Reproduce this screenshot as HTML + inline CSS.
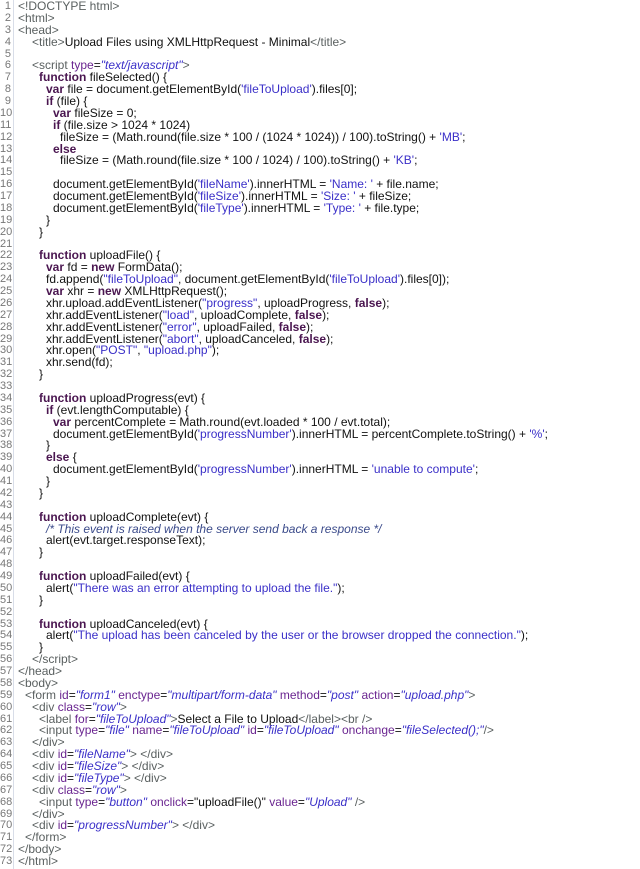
<!DOCTYPE html>
<html><head><style>
body{margin:0;background:#fff;width:640px;height:869px;overflow:hidden;font-family:"Liberation Sans",sans-serif;font-size:12px;color:#111}
#c{position:absolute;left:0;top:1px;width:640px}
.l{height:11.875px;line-height:11.875px;white-space:pre;position:relative}
.n{position:absolute;left:0;width:11px;text-align:right;color:#777;font-size:11px}
.t{position:absolute}
.g{color:#5a6060}.a{color:#6a2590}.v{color:#3a2fc8;font-style:italic}.k{color:#4a1650;font-weight:bold}.s{color:#3a2fc8}.cm{color:#3a4a8a;font-style:italic}
#bar{position:absolute;left:13px;top:0;width:1px;height:869px;background:#d8dde8}
</style></head><body><div id="bar"></div><div id="c">
<div class="l"><span class="n">1</span><span class="t g" style="left:18px">&lt;!DOCTYPE html&gt;</span></div>
<div class="l"><span class="n">2</span><span class="t g" style="left:18px">&lt;html&gt;</span></div>
<div class="l"><span class="n">3</span><span class="t g" style="left:18px">&lt;head&gt;</span></div>
<div class="l"><span class="n">4</span><span class="t" style="left:32px"><span class="g">&lt;title&gt;</span>Upload Files using XMLHttpRequest - Minimal<span class="g">&lt;/title&gt;</span></span></div>
<div class="l"><span class="n">5</span></div>
<div class="l"><span class="n">6</span><span class="t" style="left:32px"><span class="g">&lt;script </span><span class="a">type</span>=<span class="v">"text/javascript"</span><span class="g">&gt;</span></span></div>
<div class="l"><span class="n">7</span><span class="t" style="left:39px"><span class="k">function</span> fileSelected() {</span></div>
<div class="l"><span class="n">8</span><span class="t" style="left:46px"><span class="k">var</span> file = document.getElementById(<span class="s">'fileToUpload'</span>).files[0];</span></div>
<div class="l"><span class="n">9</span><span class="t" style="left:46px"><span class="k">if</span> (file) {</span></div>
<div class="l"><span class="n">10</span><span class="t" style="left:53px"><span class="k">var</span> fileSize = 0;</span></div>
<div class="l"><span class="n">11</span><span class="t" style="left:53px"><span class="k">if</span> (file.size &gt; 1024 * 1024)</span></div>
<div class="l"><span class="n">12</span><span class="t" style="left:60px">fileSize = (Math.round(file.size * 100 / (1024 * 1024)) / 100).toString() + <span class="s">'MB'</span>;</span></div>
<div class="l"><span class="n">13</span><span class="t" style="left:53px"><span class="k">else</span></span></div>
<div class="l"><span class="n">14</span><span class="t" style="left:60px">fileSize = (Math.round(file.size * 100 / 1024) / 100).toString() + <span class="s">'KB'</span>;</span></div>
<div class="l"><span class="n">15</span></div>
<div class="l"><span class="n">16</span><span class="t" style="left:53px">document.getElementById(<span class="s">'fileName'</span>).innerHTML = <span class="s">'Name: '</span> + file.name;</span></div>
<div class="l"><span class="n">17</span><span class="t" style="left:53px">document.getElementById(<span class="s">'fileSize'</span>).innerHTML = <span class="s">'Size: '</span> + fileSize;</span></div>
<div class="l"><span class="n">18</span><span class="t" style="left:53px">document.getElementById(<span class="s">'fileType'</span>).innerHTML = <span class="s">'Type: '</span> + file.type;</span></div>
<div class="l"><span class="n">19</span><span class="t" style="left:46px">}</span></div>
<div class="l"><span class="n">20</span><span class="t" style="left:39px">}</span></div>
<div class="l"><span class="n">21</span></div>
<div class="l"><span class="n">22</span><span class="t" style="left:39px"><span class="k">function</span> uploadFile() {</span></div>
<div class="l"><span class="n">23</span><span class="t" style="left:46px"><span class="k">var</span> fd = <span class="k">new</span> FormData();</span></div>
<div class="l"><span class="n">24</span><span class="t" style="left:46px">fd.append(<span class="s">"fileToUpload"</span>, document.getElementById(<span class="s">'fileToUpload'</span>).files[0]);</span></div>
<div class="l"><span class="n">25</span><span class="t" style="left:46px"><span class="k">var</span> xhr = <span class="k">new</span> XMLHttpRequest();</span></div>
<div class="l"><span class="n">26</span><span class="t" style="left:46px">xhr.upload.addEventListener(<span class="s">"progress"</span>, uploadProgress, <span class="k">false</span>);</span></div>
<div class="l"><span class="n">27</span><span class="t" style="left:46px">xhr.addEventListener(<span class="s">"load"</span>, uploadComplete, <span class="k">false</span>);</span></div>
<div class="l"><span class="n">28</span><span class="t" style="left:46px">xhr.addEventListener(<span class="s">"error"</span>, uploadFailed, <span class="k">false</span>);</span></div>
<div class="l"><span class="n">29</span><span class="t" style="left:46px">xhr.addEventListener(<span class="s">"abort"</span>, uploadCanceled, <span class="k">false</span>);</span></div>
<div class="l"><span class="n">30</span><span class="t" style="left:46px">xhr.open(<span class="s">"POST"</span>, <span class="s">"upload.php"</span>);</span></div>
<div class="l"><span class="n">31</span><span class="t" style="left:46px">xhr.send(fd);</span></div>
<div class="l"><span class="n">32</span><span class="t" style="left:39px">}</span></div>
<div class="l"><span class="n">33</span></div>
<div class="l"><span class="n">34</span><span class="t" style="left:39px"><span class="k">function</span> uploadProgress(evt) {</span></div>
<div class="l"><span class="n">35</span><span class="t" style="left:46px"><span class="k">if</span> (evt.lengthComputable) {</span></div>
<div class="l"><span class="n">36</span><span class="t" style="left:53px"><span class="k">var</span> percentComplete = Math.round(evt.loaded * 100 / evt.total);</span></div>
<div class="l"><span class="n">37</span><span class="t" style="left:53px">document.getElementById(<span class="s">'progressNumber'</span>).innerHTML = percentComplete.toString() + <span class="s">'%'</span>;</span></div>
<div class="l"><span class="n">38</span><span class="t" style="left:46px">}</span></div>
<div class="l"><span class="n">39</span><span class="t" style="left:46px"><span class="k">else</span> {</span></div>
<div class="l"><span class="n">40</span><span class="t" style="left:53px">document.getElementById(<span class="s">'progressNumber'</span>).innerHTML = <span class="s">'unable to compute'</span>;</span></div>
<div class="l"><span class="n">41</span><span class="t" style="left:46px">}</span></div>
<div class="l"><span class="n">42</span><span class="t" style="left:39px">}</span></div>
<div class="l"><span class="n">43</span></div>
<div class="l"><span class="n">44</span><span class="t" style="left:39px"><span class="k">function</span> uploadComplete(evt) {</span></div>
<div class="l"><span class="n">45</span><span class="t" style="left:46px"><span class="cm">/* This event is raised when the server send back a response */</span></span></div>
<div class="l"><span class="n">46</span><span class="t" style="left:46px">alert(evt.target.responseText);</span></div>
<div class="l"><span class="n">47</span><span class="t" style="left:39px">}</span></div>
<div class="l"><span class="n">48</span></div>
<div class="l"><span class="n">49</span><span class="t" style="left:39px"><span class="k">function</span> uploadFailed(evt) {</span></div>
<div class="l"><span class="n">50</span><span class="t" style="left:46px">alert(<span class="s">"There was an error attempting to upload the file."</span>);</span></div>
<div class="l"><span class="n">51</span><span class="t" style="left:39px">}</span></div>
<div class="l"><span class="n">52</span></div>
<div class="l"><span class="n">53</span><span class="t" style="left:39px"><span class="k">function</span> uploadCanceled(evt) {</span></div>
<div class="l"><span class="n">54</span><span class="t" style="left:46px">alert(<span class="s">"The upload has been canceled by the user or the browser dropped the connection."</span>);</span></div>
<div class="l"><span class="n">55</span><span class="t" style="left:39px">}</span></div>
<div class="l"><span class="n">56</span><span class="t g" style="left:32px">&lt;/script&gt;</span></div>
<div class="l"><span class="n">57</span><span class="t g" style="left:18px">&lt;/head&gt;</span></div>
<div class="l"><span class="n">58</span><span class="t g" style="left:18px">&lt;body&gt;</span></div>
<div class="l"><span class="n">59</span><span class="t" style="left:25px"><span class="g">&lt;form </span><span class="a">id</span>=<span class="v">"form1"</span> <span class="a">enctype</span>=<span class="v">"multipart/form-data"</span> <span class="a">method</span>=<span class="v">"post"</span> <span class="a">action</span>=<span class="v">"upload.php"</span><span class="g">&gt;</span></span></div>
<div class="l"><span class="n">60</span><span class="t" style="left:32px"><span class="g">&lt;div </span><span class="a">class</span>=<span class="v">"row"</span><span class="g">&gt;</span></span></div>
<div class="l"><span class="n">61</span><span class="t" style="left:39px"><span class="g">&lt;label </span><span class="a">for</span>=<span class="v">"fileToUpload"</span><span class="g">&gt;</span>Select a File to Upload<span class="g">&lt;/label&gt;&lt;br /&gt;</span></span></div>
<div class="l"><span class="n">62</span><span class="t" style="left:39px"><span class="g">&lt;input </span><span class="a">type</span>=<span class="v">"file"</span> <span class="a">name</span>=<span class="v">"fileToUpload"</span> <span class="a">id</span>=<span class="v">"fileToUpload"</span> <span class="a">onchange</span>=<span class="v">"fileSelected();"</span><span class="g">/&gt;</span></span></div>
<div class="l"><span class="n">63</span><span class="t g" style="left:32px">&lt;/div&gt;</span></div>
<div class="l"><span class="n">64</span><span class="t" style="left:32px"><span class="g">&lt;div </span><span class="a">id</span>=<span class="v">"fileName"</span><span class="g">&gt; &lt;/div&gt;</span></span></div>
<div class="l"><span class="n">65</span><span class="t" style="left:32px"><span class="g">&lt;div </span><span class="a">id</span>=<span class="v">"fileSize"</span><span class="g">&gt; &lt;/div&gt;</span></span></div>
<div class="l"><span class="n">66</span><span class="t" style="left:32px"><span class="g">&lt;div </span><span class="a">id</span>=<span class="v">"fileType"</span><span class="g">&gt; &lt;/div&gt;</span></span></div>
<div class="l"><span class="n">67</span><span class="t" style="left:32px"><span class="g">&lt;div </span><span class="a">class</span>=<span class="v">"row"</span><span class="g">&gt;</span></span></div>
<div class="l"><span class="n">68</span><span class="t" style="left:39px"><span class="g">&lt;input </span><span class="a">type</span>=<span class="v">"button"</span> <span class="a">onclick</span>="uploadFile()" <span class="a">value</span>=<span class="v">"Upload"</span><span class="g"> /&gt;</span></span></div>
<div class="l"><span class="n">69</span><span class="t g" style="left:32px">&lt;/div&gt;</span></div>
<div class="l"><span class="n">70</span><span class="t" style="left:32px"><span class="g">&lt;div </span><span class="a">id</span>=<span class="v">"progressNumber"</span><span class="g">&gt; &lt;/div&gt;</span></span></div>
<div class="l"><span class="n">71</span><span class="t g" style="left:25px">&lt;/form&gt;</span></div>
<div class="l"><span class="n">72</span><span class="t g" style="left:18px">&lt;/body&gt;</span></div>
<div class="l"><span class="n">73</span><span class="t g" style="left:18px">&lt;/html&gt;</span></div>
</div></body></html>
